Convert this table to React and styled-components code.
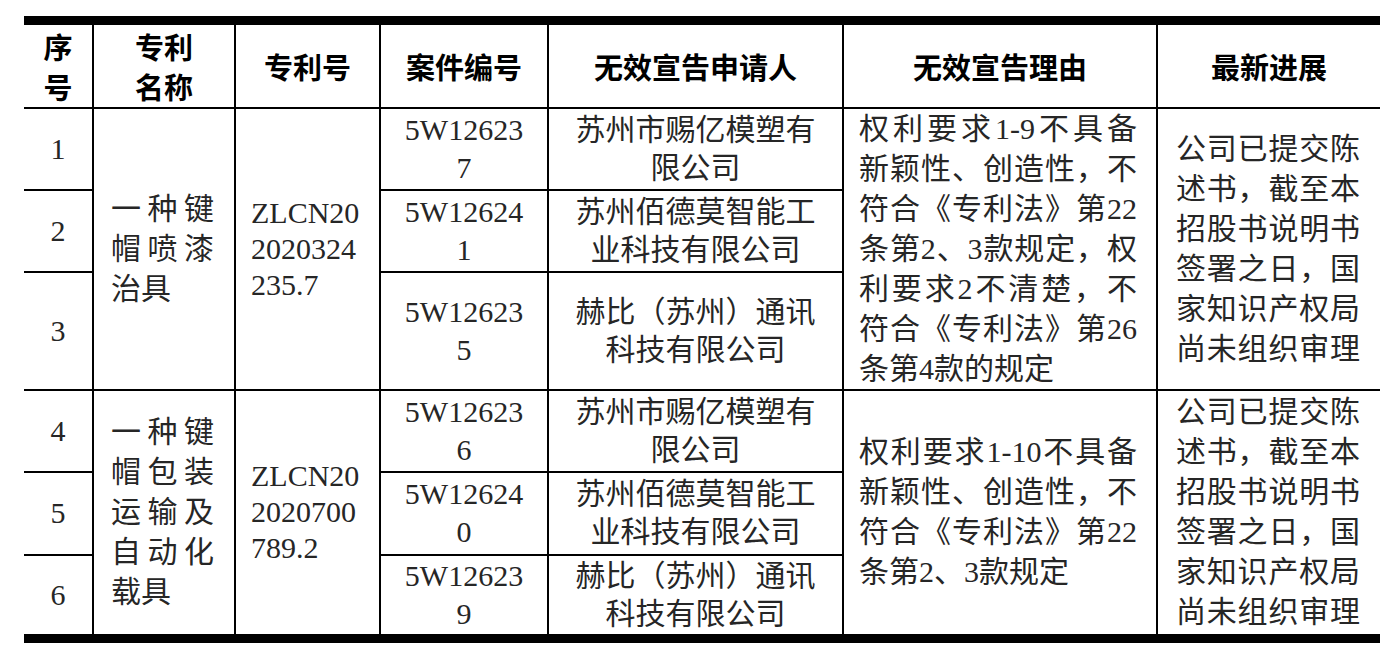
import React from 'react';
import styled, {createGlobalStyle, css} from 'styled-components';

const GlobalStyle = createGlobalStyle`
    html, body {
        margin: 0;
        padding: 0;
        background: #fff;
    }
`;

const Page = styled.div`
    padding: 16px 0 0 24px;
    width: 1398px;
    height: 650px;
    box-sizing: border-box;
    overflow: hidden;
`;

const Sheet = styled.table`
    border-collapse: collapse;
    table-layout: fixed;
    width: 1356px;
    border-top: 9px solid #000;
    border-bottom: 9px solid #000;
    font-family: "Liberation Serif", "Noto Sans CJK SC", serif;
    font-size: 30px;
    color: #262626;

    td, th {
        border: 2px solid #000;
        padding: 0;
        vertical-align: middle;
    }

    tr > :first-child {
        border-left: none;
    }

    tr > :last-child {
        border-right: none;
    }
`;

const Row = styled.tr`
    height: ${props => props.$h}px;
`;

const HeadCell = styled.th`
    font-family: "Noto Sans CJK SC", sans-serif;
    font-weight: 700;
    font-size: 29px;
    line-height: 40px;
    color: #000;
    text-align: center;
`;

const Cell = styled.td`
    line-height: ${props => props.$lh || 40}px;
    text-align: ${props => props.$align || 'center'};
    padding-left: ${props => props.$pl || 0}px !important;
    padding-right: ${props => props.$pr || 0}px !important;
`;

const Line = styled.span`
    display: block;
    white-space: nowrap;
    ${props => props.$justify && css`
        text-align: justify;
        text-align-last: justify;
    `}
`;

const Lines = ({items, justify, lastLeft}) => (
    <>
        {items.map((t, i) => (
            <Line key={i} $justify={justify && !(lastLeft && i === items.length - 1)}>{t}</Line>
        ))}
    </>
);

const groups = [
    {
        name: ['一种键', '帽喷漆', '治具'],
        patent: ['ZLCN20', '2020324', '235.7'],
        rows: [
            {no: '1', h: 82, cas: ['5W12623', '7'], who: ['苏州市赐亿模塑有', '限公司']},
            {no: '2', h: 82, cas: ['5W12624', '1'], who: ['苏州佰德莫智能工', '业科技有限公司']},
            {no: '3', h: 118, cas: ['5W12623', '5'], who: ['赫比（苏州）通讯', '科技有限公司']}
        ],
        reason: [
            '权利要求1-9不具备',
            '新颖性、创造性，不',
            '符合《专利法》第22',
            '条第2、3款规定，权',
            '利要求2不清楚，不',
            '符合《专利法》第26',
            '条第4款的规定'
        ]
    },
    {
        name: ['一种键', '帽包装', '运输及', '自动化', '载具'],
        patent: ['ZLCN20', '2020700', '789.2'],
        rows: [
            {no: '4', h: 82, cas: ['5W12623', '6'], who: ['苏州市赐亿模塑有', '限公司']},
            {no: '5', h: 83, cas: ['5W12624', '0'], who: ['苏州佰德莫智能工', '业科技有限公司']},
            {no: '6', h: 84, cas: ['5W12623', '9'], who: ['赫比（苏州）通讯', '科技有限公司']}
        ],
        reason: [
            '权利要求1-10不具备',
            '新颖性、创造性，不',
            '符合《专利法》第22',
            '条第2、3款规定'
        ]
    }
];

const progress = ['公司已提交陈', '述书，截至本', '招股书说明书', '签署之日，国', '家知识产权局', '尚未组织审理'];

export default function App() {
    return (
        <Page>
            <GlobalStyle/>
            <Sheet>
                <colgroup>
                    <col style={{width: 69}}/>
                    <col style={{width: 142}}/>
                    <col style={{width: 145}}/>
                    <col style={{width: 168}}/>
                    <col style={{width: 295}}/>
                    <col style={{width: 314}}/>
                    <col style={{width: 223}}/>
                </colgroup>
                <thead>
                    <Row $h={87}>
                        <HeadCell>序<br/>号</HeadCell>
                        <HeadCell>专利<br/>名称</HeadCell>
                        <HeadCell>专利号</HeadCell>
                        <HeadCell>案件编号</HeadCell>
                        <HeadCell>无效宣告申请人</HeadCell>
                        <HeadCell>无效宣告理由</HeadCell>
                        <HeadCell>最新进展</HeadCell>
                    </Row>
                </thead>
                <tbody>
                    {groups.map(g => g.rows.map((r, i) => (
                        <Row key={r.no} $h={r.h}>
                            <Cell>{r.no}</Cell>
                            {i === 0 && (
                                <Cell rowSpan={3} $align="left" $pl={17} $pr={20}>
                                    <Lines items={g.name} justify lastLeft/>
                                </Cell>
                            )}
                            {i === 0 && (
                                <Cell rowSpan={3} $align="left" $lh={36} $pl={15}>
                                    <Lines items={g.patent}/>
                                </Cell>
                            )}
                            <Cell $lh={38}>
                                <Lines items={r.cas}/>
                            </Cell>
                            <Cell $lh={38}>
                                <Lines items={r.who}/>
                            </Cell>
                            {i === 0 && (
                                <Cell rowSpan={3} $align="left" $pl={15} $pr={19}>
                                    <Lines items={g.reason} justify lastLeft/>
                                </Cell>
                            )}
                            {i === 0 && (
                                <Cell rowSpan={3} $align="left" $pl={18} $pr={20}>
                                    <Lines items={progress} justify/>
                                </Cell>
                            )}
                        </Row>
                    )))}
                </tbody>
            </Sheet>
        </Page>
    );
}
